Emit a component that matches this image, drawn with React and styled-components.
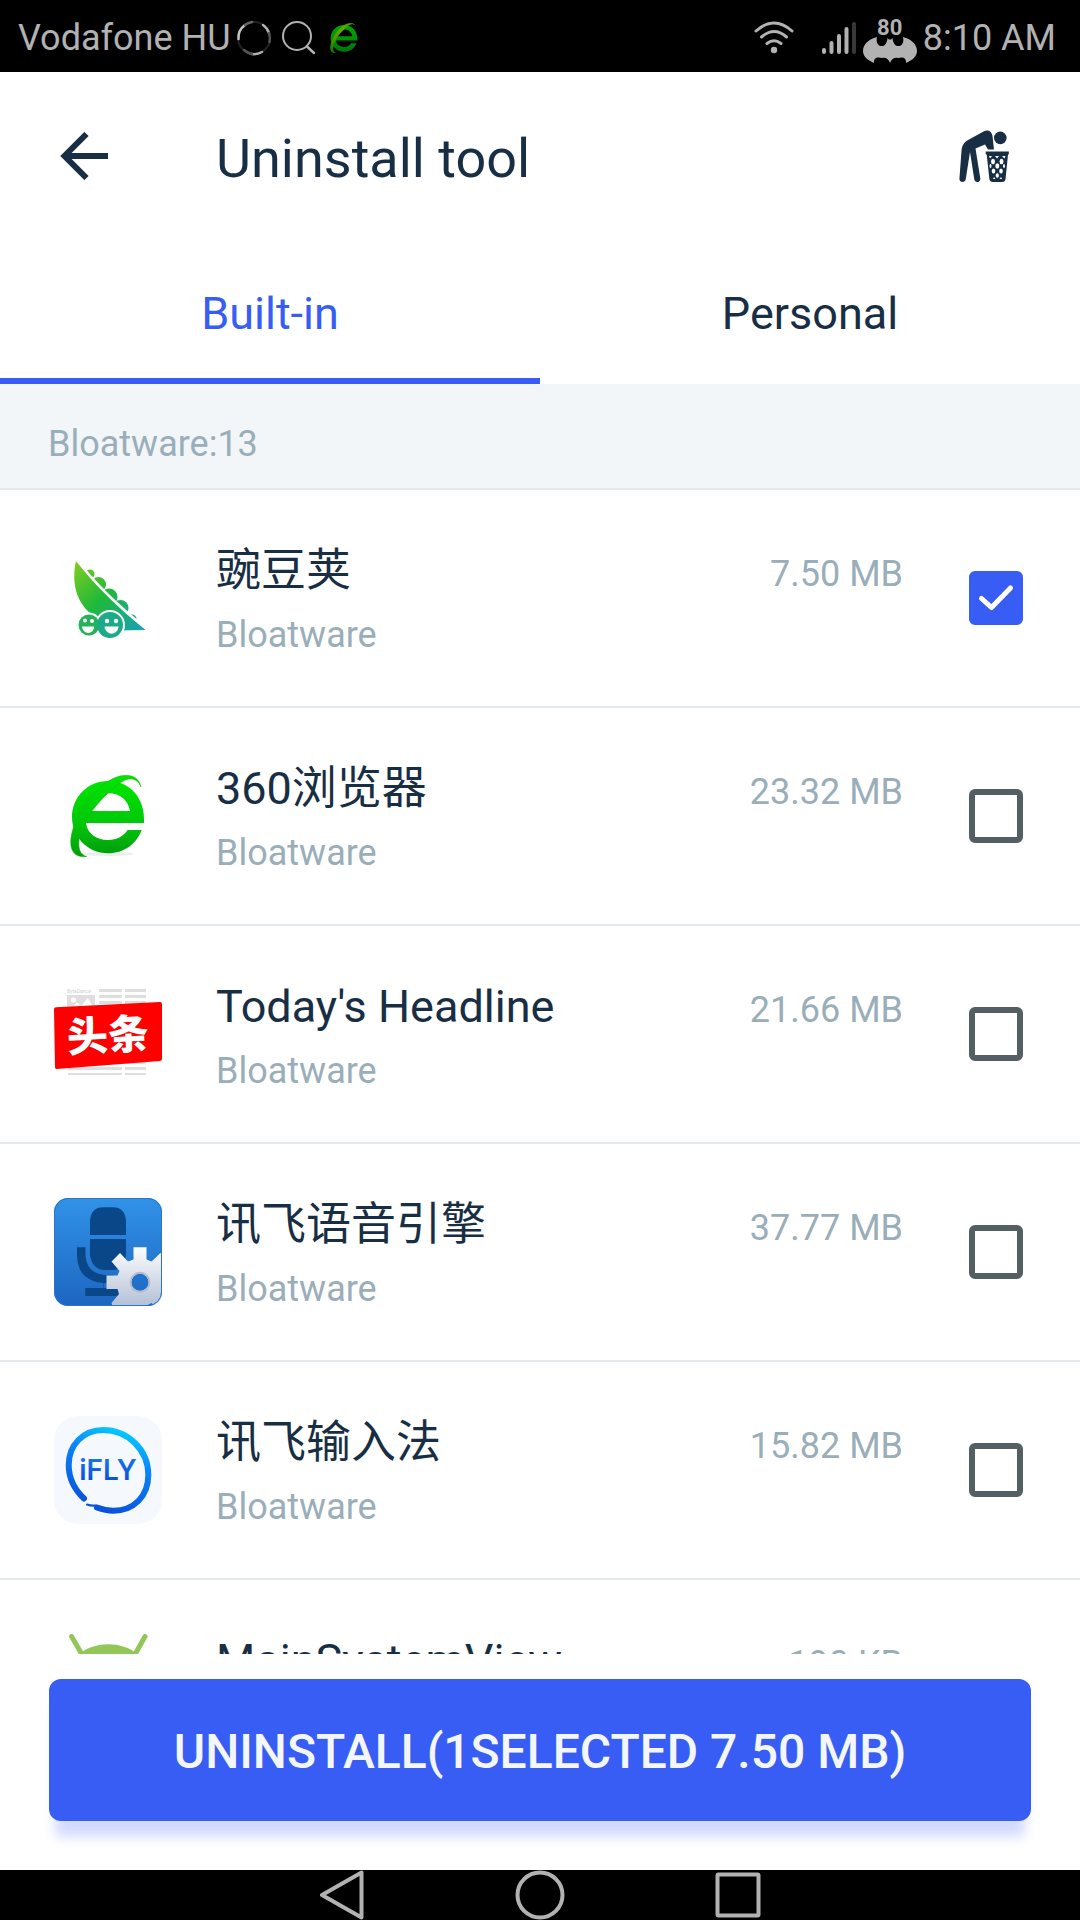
import React, { useState } from "react";
import styled, { createGlobalStyle } from "styled-components";

const color = {
  ink: "#182e44",
  muted: "#9aaeba",
  blue: "#385df5",
  line: "#e4e9ed",
  band: "#f2f6f9",
  status: "#b2b2b2",
};

const GlobalStyle = createGlobalStyle`
  *, *::before, *::after { box-sizing: border-box; }
  body {
    margin: 0;
    background: #fff;
    color: ${color.ink};
    font-family: Roboto, "Noto Sans CJK SC", sans-serif;
  }
  button { font: inherit; color: inherit; border: 0; background: none; padding: 0; cursor: pointer; }
  svg { display: block; flex: none; }
`;

const Screen = styled.div`
  display: flex;
  flex-direction: column;
  height: 100vh;
`;

const StatusBar = styled.div`
  display: flex;
  justify-content: space-between;
  align-items: center;
  flex: none;
  height: 72px;
  padding: 3px 24px 0 18px;
  background: #000;
  color: ${color.status};
  font-size: 36px;
  line-height: 42px;
`;

const StatusGroup = styled.div`
  display: flex;
  align-items: center;
`;

const StatusIcon = styled.span`
  margin-left: ${(p) => p.$gap}px;
`;

const Battery = styled.span`
  display: flex;
  flex-direction: column;
  align-items: center;
  margin: 6px 6px 0 6px;
  font-size: 22px;
  font-weight: 700;
  line-height: 18px;
`;

const Header = styled.header`
  display: grid;
  grid-template-columns: 48px 1fr 54px;
  column-gap: 108px;
  align-items: center;
  flex: none;
  height: 168px;
  padding: 0 69px 0 60px;
`;

const Title = styled.h1`
  margin: 0;
  padding-top: 5px;
  font-size: 54px;
  font-weight: 400;
  line-height: 64px;
`;

const Tabs = styled.div`
  display: grid;
  grid-template-columns: 1fr 1fr;
  flex: none;
  height: 144px;
`;

const Tab = styled.button`
  padding-top: 10px;
  font-size: 45px;
  line-height: 54px;
  color: ${(p) => (p.$active ? color.blue : color.ink)};
  border-bottom: 6px solid ${(p) => (p.$active ? color.blue : "transparent")};
`;

const Summary = styled.p`
  flex: none;
  margin: 0;
  padding: 39px 48px 23px;
  background: ${color.band};
  border-bottom: 2px solid ${color.line};
  color: ${color.muted};
  font-size: 36px;
  line-height: 42px;
`;

const List = styled.ul`
  flex: 1;
  min-height: 0;
  margin: 0;
  padding: 0;
  list-style: none;
  overflow: hidden;
`;

const Row = styled.li`
  display: grid;
  grid-template-columns: 108px 1fr 54px;
  align-items: start;
  padding: 54px 57px 50px 54px;
  border-bottom: 2px solid ${color.line};
`;

const Details = styled.div`
  display: flex;
  flex-direction: column;
  gap: 16px;
  margin: 0 66px 0 54px;
`;

const NameLine = styled.div`
  display: flex;
  justify-content: space-between;
  align-items: baseline;
`;

const Name = styled.label`
  font-size: 45px;
  line-height: 54px;
`;

const Note = styled.span`
  color: ${color.muted};
  font-size: 36px;
  line-height: 42px;
`;

const CheckWrap = styled.span`
  display: grid;
  place-items: center;
  height: 108px;

  & > * { grid-area: 1 / 1; }
  svg { pointer-events: none; }
`;

const Box = styled.input`
  appearance: none;
  width: 54px;
  height: 54px;
  margin: 0;
  border: 6px solid #545f63;
  border-radius: 6px;

  &:checked {
    background: ${color.blue};
    border-color: ${color.blue};
  }
`;

const Footer = styled.footer`
  flex: none;
  padding: 25px 49px 49px;
`;

const Uninstall = styled.button`
  width: 100%;
  height: 142px;
  padding-top: 4px;
  border-radius: 12px;
  background: ${color.blue};
  color: #f3f6fb;
  font-size: 48px;
  font-weight: 500;
  line-height: 56px;
  text-transform: uppercase;
  box-shadow: 0 22px 12px -6px rgba(56, 93, 245, 0.22);
`;

const NavBar = styled.nav`
  display: flex;
  justify-content: center;
  gap: 148px;
  flex: none;
  background: #000;
`;

/* ---------- drawings ---------- */

const BrowserLogo = ({ size, id, dim }) => (
  <svg width={size} height={size} viewBox="0 0 108 108" opacity={dim ? 0.72 : 1} aria-hidden="true">
    <defs>
      <linearGradient id={id} x1="0" y1="0" x2="0" y2="1">
        <stop offset="0" stopColor="#00e600" />
        <stop offset=".6" stopColor="#00c70a" />
        <stop offset="1" stopColor="#009f0c" />
      </linearGradient>
      <linearGradient id={id + "s"} x1="1" y1="0" x2="0" y2="1">
        <stop offset="0" stopColor="#3fc400" />
        <stop offset=".35" stopColor="#8fe600" />
        <stop offset=".7" stopColor="#6fd000" />
        <stop offset="1" stopColor="#0d9a12" />
      </linearGradient>
    </defs>
    {!dim && <ellipse cx="54" cy="92" rx="26" ry="2" fill="#eceeec" />}
    <path
      fill={`url(#${id})`}
      fillRule="evenodd"
      d="M90 61H32C33 71 42 78 54 78C63 78 70 74 73.500 68H87.700C82.500 82 70 91.300 54 91.300C34 91.300 18 75 18 55C18 35 34 19 54 19C76 19 91.500 36 90 61ZM33 49H76C74 38 66 31.300 54.500 31.300C43 31.300 35.500 38 33 49Z"
    />
    <path
      d="M87 25C84 10 66 10 50 22C32 36 17 62 16.700 80C16.500 90 22 96 33 94.500C26 93 23 86 26 72C30 55 50 33 66 21C74 15 83 15 87 25Z"
      fill={`url(#${id}s)`}
      stroke={dim ? "#000" : "#2fae08"}
      strokeWidth={dim ? 0 : 0.5}
    />
  </svg>
);

const PeapodLogo = () => (
  <svg width="108" height="108" viewBox="0 0 108 108" aria-hidden="true">
    <defs>
      <linearGradient id="pod" gradientUnits="userSpaceOnUse" x1="20" y1="22" x2="84" y2="92">
        <stop offset="0" stopColor="#7acb22" />
        <stop offset=".45" stopColor="#1fb93a" />
        <stop offset="1" stopColor="#18a0b8" />
      </linearGradient>
    </defs>
    <g fill="url(#pod)">
      <circle cx="36" cy="30" r="4.500" />
      <circle cx="44.500" cy="40.500" r="7.500" />
      <circle cx="55" cy="53" r="8.500" />
      <circle cx="66.500" cy="64" r="8" />
      <circle cx="78" cy="75" r="4.500" />
    </g>
    <path d="M22 17C38 38 61 61 92 86L60 86L36 60Z" fill="#fff" stroke="#fff" strokeWidth="5" />
    <path d="M22 17C17 39 23 58 36 69L62 86.500L91.500 86C67 66 42 43 22 17Z" fill="url(#pod)" />
    <circle cx="35" cy="81" r="12.500" fill="#fff" />
    <circle cx="56" cy="81" r="15" fill="#fff" />
    <circle cx="35" cy="81" r="10.500" fill="#25b35a" />
    <circle cx="56" cy="81" r="13" fill="#1bab86" />
    <g fill="#fff">
      <circle cx="31" cy="76.500" r="2" />
      <circle cx="38" cy="77" r="2" />
      <circle cx="53" cy="77" r="2.200" />
      <circle cx="62" cy="77" r="2.200" />
      <path d="M28 82.500H40C40 91 29 91 28 82.500ZM50.500 82.500H64.500C64 92 51.500 92 50.500 82.500Z" />
    </g>
  </svg>
);

const HeadlineLogo = () => (
  <svg width="108" height="108" viewBox="0 0 108 108" aria-hidden="true">
    <text x="13" y="13" fontSize="5" fill="#cfcfcf" fontFamily="Roboto, sans-serif">ByteDance</text>
    <path fill="#dedede" d="M13 15H41V33H13ZM45 9H68V12H45ZM71 9H92V12H71ZM45 15H68V18H45ZM71 15H92V18H71ZM45 21H68V24H45ZM71 21H92V24H71ZM14 82H68V84H14ZM71 82H92V84H71ZM14 87H68V90H14ZM71 87H92V90H71ZM14 93H68V95H14ZM71 93H92V95H71Z" />
    <circle cx="19.500" cy="20" r="2.500" fill="#fff" />
    <path d="M17 29L23 22L27 26L34 18L40 29Z" fill="#fff" />
    <path d="M2 27.300L106 22Q108 22 108 24V79Q108 80.700 106 80.900L2.500 89Q1 89 1 87L0 29.300Q0 27.300 2 27.300Z" fill="#fe0000" />
    <text
      x="13"
      y="70"
      fontSize="41"
      fontWeight="900"
      fill="#fff"
      fontFamily='"Noto Sans CJK SC", sans-serif'
      transform="rotate(-3 54 55)"
    >
      头条
    </text>
  </svg>
);

const VoiceLogo = () => (
  <svg width="108" height="108" viewBox="0 0 108 108" aria-hidden="true">
    <defs>
      <linearGradient id="voice" x1="0" y1="0" x2="0" y2="1">
        <stop offset="0" stopColor="#3192e8" />
        <stop offset="1" stopColor="#1d66c0" />
      </linearGradient>
      <linearGradient id="gear" gradientUnits="userSpaceOnUse" x1="0" y1="49" x2="0" y2="108">
        <stop offset="0" stopColor="#fdfdfe" />
        <stop offset="1" stopColor="#b3c0d6" />
      </linearGradient>
      <clipPath id="tile">
        <rect width="108" height="108" rx="14" />
      </clipPath>
    </defs>
    <g clipPath="url(#tile)">
      <rect width="108" height="108" fill="url(#voice)" />
      <g fill="#0a4789">
        <path d="M36 37V23Q37 9.300 49 9.300H59Q71 9.300 72 23V37Z" />
        <path d="M36 41H72V57Q70 72 59 72H50Q38 71 36 57Z" />
        <path d="M23 49.300H31.500V58Q33 75 50 77H60V85H50V90H80V98H31.300V90H49.500V85Q24 83 23 58Z" />
      </g>
      <g fill="url(#gear)">
        <path
          fillRule="evenodd"
          d="M79.500 49.300H92.500V61.500L97.500 63.500L106.500 55L115.500 64L107 73L109 78H121V91H109L107 96L115.500 105L106.500 114L97.500 105L92 108H58.500L57.500 105L65 96L63.500 91H52.500V77.500H63.500L65.500 73L57.500 63.500L66 55L74 63.500L79.500 61.500ZM86 75.600A8.700 8.700 0 1 0 86 93A8.700 8.700 0 1 0 86 75.600Z"
        />
      </g>
      <circle cx="86" cy="84.300" r="9.500" fill="none" stroke="#b3bdd0" strokeWidth="2" />
    </g>
    <rect x=".5" y=".5" width="107" height="107" rx="13.500" fill="none" stroke="#2b75cb" />
  </svg>
);

const FlyLogo = () => (
  <svg width="108" height="108" viewBox="0 0 108 108" aria-hidden="true">
    <defs>
      <linearGradient id="ring" gradientUnits="userSpaceOnUse" x1="72" y1="14" x2="44" y2="95">
        <stop offset="0" stopColor="#03cdff" />
        <stop offset=".35" stopColor="#0a86f7" />
        <stop offset="1" stopColor="#0a4fdc" />
      </linearGradient>
      <linearGradient id="flyText" x1="0" y1="0" x2="0" y2="1">
        <stop offset="0" stopColor="#1b7cf0" />
        <stop offset="1" stopColor="#0647d3" />
      </linearGradient>
    </defs>
    <rect width="108" height="108" rx="24" fill="#f5f9fe" />
    <g fill="none" stroke="url(#ring)" strokeLinecap="round">
      <path strokeWidth="6" d="M30 82.500C20 73 14.700 62 14.700 49C14.700 29 29 14 49.300 14C73 14 94.300 33 94.300 59C94.300 80 80 94.700 59.300 94.700C53 94.700 47 93 43 91.500" />
      <path strokeWidth="2" d="M33 88.500Q37 90 42 89.500" />
    </g>
    <text x="54" y="64" textAnchor="middle" fontSize="28" fontWeight="600" fill="url(#flyText)" fontFamily="Inter, sans-serif">
      iFLY
    </text>
  </svg>
);

const RobotLogo = () => (
  <svg width="108" height="108" viewBox="0 0 108 108" aria-hidden="true">
    <path d="M17.600 2.500L30 24M91 2.500L79 24" stroke="#93c658" strokeWidth="5" strokeLinecap="round" />
    <path d="M10 50C12 24 32 10.300 54.300 10.300C77 10.300 96 24 98 50Z" fill="#93c658" />
  </svg>
);

const BinIcon = () => (
  <svg width="54" height="54" viewBox="0 0 54 54" fill={color.ink} aria-hidden="true">
    <path d="M2.400 50L4.500 22C5 16 7 13 12 10.500L27 2.300C31 .3 34.800 2 35.500 7L37 20.500H31L28 15.500L18.500 19.500L23.300 49.500C23.700 53.700 18 54.200 17.300 50.500L13 23L8.700 50.500C8 54 2.400 53.500 2.400 50Z" />
    <circle cx="43.300" cy="8.900" r="6.300" />
    <path d="M28.700 22.500H51.800V25.500H51L48.600 49.500Q48.300 53 45 53H36Q32.700 53 32.300 49.500L29.700 25.500H28.700Z" />
    <g fill="#fff">
      <path d="M32 27H35L33 29.500ZM38 27H42L40 29.500ZM45 27H48.500L47.500 29.500Z" />
      <ellipse cx="36" cy="32.500" rx="2" ry="2.700" />
      <ellipse cx="44.500" cy="32.500" rx="2" ry="2.700" />
      <ellipse cx="40.300" cy="37" rx="2" ry="2.700" />
      <ellipse cx="33.500" cy="37" rx="1" ry="2" />
      <ellipse cx="47" cy="37" rx="1" ry="2" />
      <ellipse cx="36.500" cy="42" rx="1.800" ry="2.500" />
      <ellipse cx="44" cy="42" rx="1.800" ry="2.500" />
      <ellipse cx="40.300" cy="46.500" rx="1.600" ry="2.200" />
      <path d="M36 50L37 48L38.500 50ZM42.500 50L44 48L45 50Z" />
    </g>
  </svg>
);

const LoaderIcon = () => (
  <svg width="36" height="36" viewBox="0 0 36 36" fill="none" strokeLinecap="round" aria-hidden="true">
    <circle cx="18" cy="18" r="16" stroke="#222" strokeWidth="2" />
    <path d="M2.500 19A16 16 0 0 1 9 5" stroke="#c4c4c4" strokeWidth="2.500" />
    <path d="M9 5A16 16 0 0 1 16 2" stroke="#666" strokeWidth="2.500" />
    <path d="M27 5A16 16 0 0 1 33 13" stroke="#b0b0b0" strokeWidth="2.500" />
    <path d="M33 13A16 16 0 0 1 33.500 22" stroke="#555" strokeWidth="2.500" />
    <path d="M26 32A16 16 0 0 1 16 34" stroke="#b0b0b0" strokeWidth="2.500" />
    <path d="M16 34A16 16 0 0 1 8 30" stroke="#555" strokeWidth="2.500" />
  </svg>
);

const SearchIcon = () => (
  <svg width="34" height="34" viewBox="0 0 34 34" fill="none" stroke={color.status} strokeWidth="2" strokeLinecap="round" aria-hidden="true">
    <circle cx="15" cy="15" r="14" />
    <path d="M25 25.500L32 32" strokeWidth="2.500" />
  </svg>
);

const WifiIcon = () => (
  <svg width="40" height="34" viewBox="0 0 40 34" fill="none" stroke={color.status} strokeWidth="3" strokeLinecap="round" aria-hidden="true">
    <path d="M2 10Q20-6 38 10M7.500 16Q20 5 32.500 16M13 22.500Q20 17 27 22.500" />
    <circle cx="20" cy="29" r="3.200" fill={color.status} stroke="none" />
  </svg>
);

const SignalIcon = () => (
  <svg width="36" height="34" viewBox="0 0 36 34" strokeWidth="4" strokeLinecap="round" stroke={color.status} aria-hidden="true">
    <path d="M3 29V31M10.500 22V31M18 15V31M25.500 8V31" />
    <path d="M33 3V31" stroke="#383838" />
  </svg>
);

const BatIcon = () => (
  <svg width="54" height="26" viewBox="0 0 54 26" fill={color.status} aria-hidden="true">
    <path d="M11 26C4 23 0 19 0 14C0 7 6 2 14 0C13 4 14 8.500 18 9C22 9.500 24 6 24.500 1L26 2.500H28L29.500 1C30 6 32 9.500 36 9C40 8.500 41 4 40 0C48 2 54 7 54 14C54 19 50 23 43 26C43.500 21 40 19.500 35 21C31 20 28.500 22 27 26C25.500 22 23 20 19 21C14 19.500 10.500 21 11 26Z" />
  </svg>
);

const BackArrow = () => (
  <svg width="48" height="48" viewBox="0 0 48 48" fill="none" stroke={color.ink} strokeWidth="6" aria-hidden="true">
    <path d="M48.300 24H5M26.500 2L4.500 24L26.500 46" />
  </svg>
);

const NavIcon = ({ children }) => (
  <svg width="50" height="50" viewBox="0 0 50 50" fill="none" stroke={color.status} strokeWidth="4" strokeLinejoin="round" aria-hidden="true">
    {children}
  </svg>
);

/* ---------- data ---------- */

const apps = [
  { id: "wdj", name: "豌豆荚", size: "7.50 MB", logo: <PeapodLogo /> },
  { id: "b360", name: "360浏览器", size: "23.32 MB", logo: <BrowserLogo size={108} id="e" /> },
  { id: "news", name: "Today's Headline", size: "21.66 MB", logo: <HeadlineLogo /> },
  { id: "voice", name: "讯飞语音引擎", size: "37.77 MB", logo: <VoiceLogo /> },
  { id: "ime", name: "讯飞输入法", size: "15.82 MB", logo: <FlyLogo /> },
  { id: "msv", name: "MainSystemView", size: "190 KB", logo: <RobotLogo /> },
];

function AppRow({ app, checked, onToggle }) {
  return (
    <Row>
      {app.logo}
      <Details>
        <NameLine>
          <Name htmlFor={app.id}>{app.name}</Name>
          <Note>{app.size}</Note>
        </NameLine>
        <Note>Bloatware</Note>
      </Details>
      <CheckWrap>
        <Box type="checkbox" id={app.id} checked={checked} onChange={onToggle} />
        {checked && (
          <svg width="54" height="54" viewBox="0 0 54 54" fill="none" stroke="#fff" strokeWidth="5" strokeLinecap="round" strokeLinejoin="round" aria-hidden="true">
            <path d="M12.500 27.500L22.500 36.500L41.500 17" />
          </svg>
        )}
      </CheckWrap>
    </Row>
  );
}

export default function App() {
  const [selected, setSelected] = useState(["wdj"]);
  const [tab, setTab] = useState("Built-in");
  const toggle = (id) =>
    setSelected((s) => (s.includes(id) ? s.filter((x) => x !== id) : [...s, id]));
  const total = apps
    .filter((a) => selected.includes(a.id))
    .reduce((sum, a) => sum + parseFloat(a.size) / (a.size.endsWith("KB") ? 1024 : 1), 0);

  return (
    <Screen>
      <GlobalStyle />
      <StatusBar>
        <StatusGroup>
          <span>Vodafone HU</span>
          <StatusIcon $gap={5}><LoaderIcon /></StatusIcon>
          <StatusIcon $gap={10}><SearchIcon /></StatusIcon>
          <StatusIcon $gap={8}><BrowserLogo size={40} id="es" dim /></StatusIcon>
        </StatusGroup>
        <StatusGroup>
          <WifiIcon />
          <StatusIcon $gap={27}><SignalIcon /></StatusIcon>
          <Battery>
            80
            <BatIcon />
          </Battery>
          <span>8:10 AM</span>
        </StatusGroup>
      </StatusBar>

      <Header>
        <button type="button" aria-label="Back"><BackArrow /></button>
        <Title>Uninstall tool</Title>
        <button type="button" aria-label="Clean up"><BinIcon /></button>
      </Header>

      <Tabs role="tablist">
        {["Built-in", "Personal"].map((t) => (
          <Tab key={t} type="button" role="tab" aria-selected={tab === t} $active={tab === t} onClick={() => setTab(t)}>
            {t}
          </Tab>
        ))}
      </Tabs>

      <Summary>Bloatware:13</Summary>

      <List>
        {apps.map((app) => (
          <AppRow key={app.id} app={app} checked={selected.includes(app.id)} onToggle={() => toggle(app.id)} />
        ))}
      </List>

      <Footer>
        <Uninstall type="button">
          {`Uninstall(${selected.length}selected ${total.toFixed(2)} MB)`}
        </Uninstall>
      </Footer>

      <NavBar>
        <button type="button" aria-label="Go back">
          <NavIcon><path d="M44.500 2.500V47.500L5 25Z" /></NavIcon>
        </button>
        <button type="button" aria-label="Home">
          <NavIcon><circle cx="25" cy="25" r="22.500" /></NavIcon>
        </button>
        <button type="button" aria-label="Recent apps">
          <NavIcon><rect x="4.500" y="4.500" width="41" height="41" rx="1" /></NavIcon>
        </button>
      </NavBar>
    </Screen>
  );
}
